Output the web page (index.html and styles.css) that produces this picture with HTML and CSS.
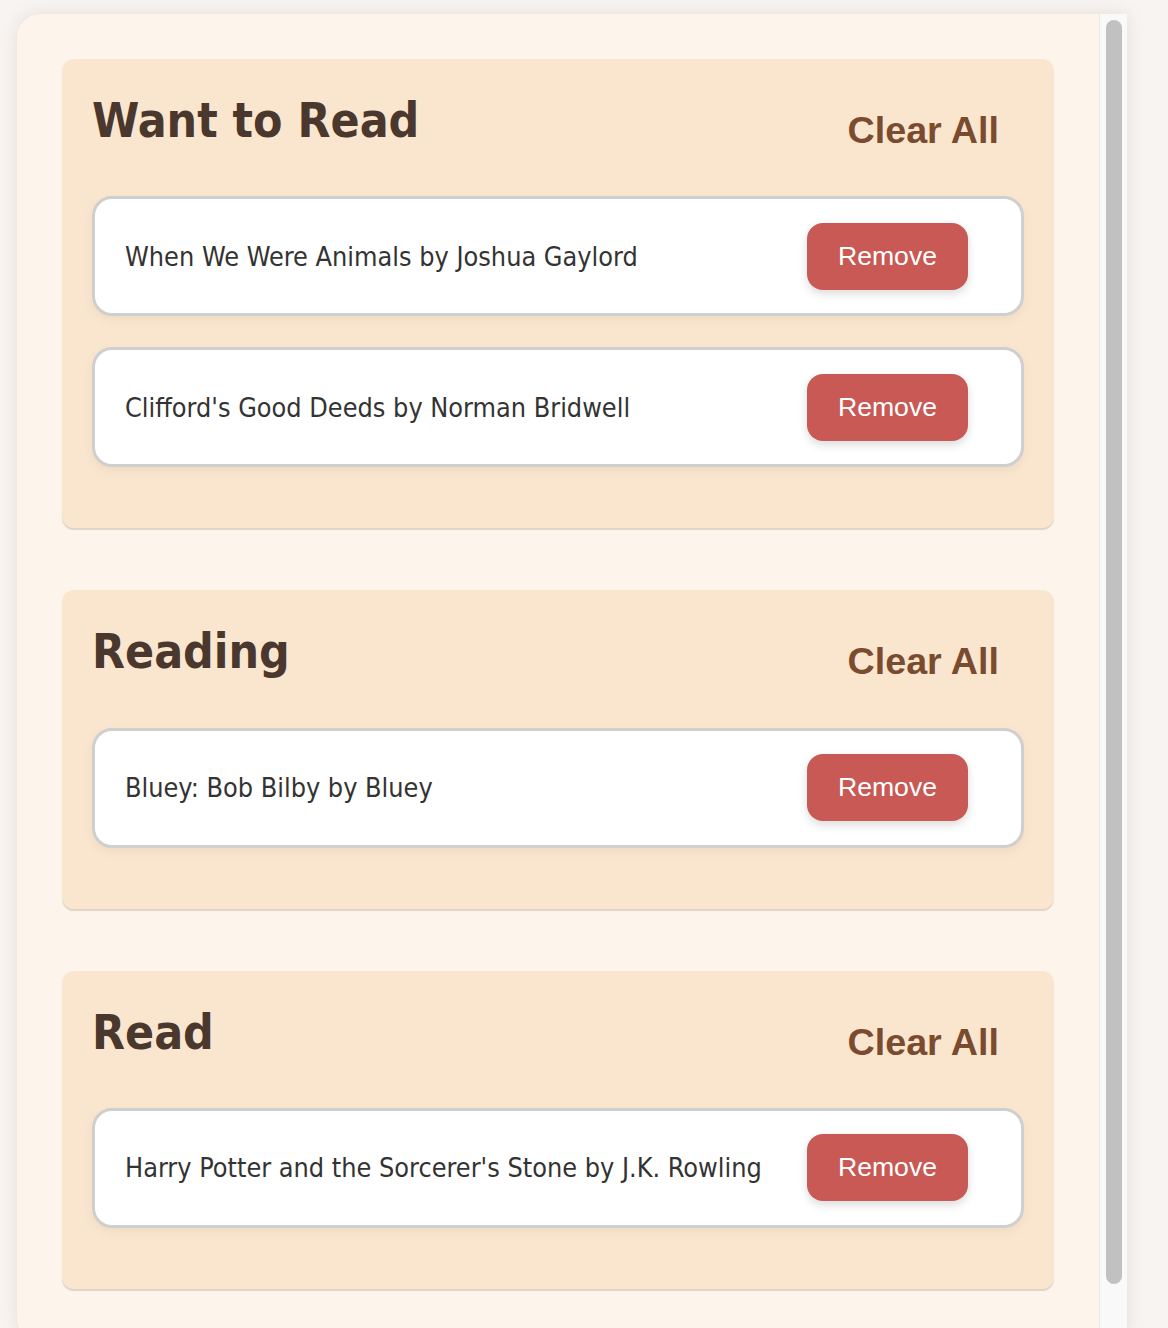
FILE: index.html
```html
<!DOCTYPE html>
<html lang="en">
<head>
<meta charset="utf-8">
<title>My Shelves</title>
<link rel="stylesheet" href="styles.css">
</head>
<body>
<div class="app">
  <main class="shelves">
    <section class="shelf">
      <div class="shelf-header">
        <h2 class="shelf-title">Want to Read</h2>
        <button class="clear-btn" type="button">Clear All</button>
      </div>
      <ul class="book-list">
        <li class="book-item">
          <span class="book-text">When We Were Animals by Joshua Gaylord</span>
          <button class="remove-btn" type="button">Remove</button>
        </li>
        <li class="book-item">
          <span class="book-text">Clifford's Good Deeds by Norman Bridwell</span>
          <button class="remove-btn" type="button">Remove</button>
        </li>
      </ul>
    </section>

    <section class="shelf">
      <div class="shelf-header">
        <h2 class="shelf-title">Reading</h2>
        <button class="clear-btn" type="button">Clear All</button>
      </div>
      <ul class="book-list">
        <li class="book-item">
          <span class="book-text">Bluey: Bob Bilby by Bluey</span>
          <button class="remove-btn" type="button">Remove</button>
        </li>
      </ul>
    </section>

    <section class="shelf">
      <div class="shelf-header">
        <h2 class="shelf-title">Read</h2>
        <button class="clear-btn" type="button">Clear All</button>
      </div>
      <ul class="book-list">
        <li class="book-item">
          <span class="book-text">Harry Potter and the Sorcerer's Stone by J.K. Rowling</span>
          <button class="remove-btn" type="button">Remove</button>
        </li>
      </ul>
    </section>
  </main>
  <div class="scrollbar" aria-hidden="true">
    <div class="scrollbar-thumb"></div>
  </div>
</div>
</body>
</html>
```

FILE: styles.css
```css
html, body {
  margin: 0;
  padding: 0;
  height: 100%;
  overflow: hidden;
}

body {
  background: #f8f4f1;
  font-family: "DejaVu Sans Condensed", "DejaVu Sans", sans-serif;
}

.app {
  box-sizing: border-box;
  width: 1110px;
  height: 1328px;
  margin: 14px 0 0 17px;
  display: flex;
  background: #fdf5ec;
  border-radius: 24px 0 0 24px;
  box-shadow: 0 0 18px rgba(60, 40, 20, 0.10);
  overflow: hidden;
}

.shelves {
  flex: 1;
  min-width: 0;
  padding: 45px;
  overflow: hidden;
}

.scrollbar {
  box-sizing: border-box;
  width: 28px;
  flex: none;
  background: #f9f9f9;
  border-left: 1px solid #e6e6e6;
  padding: 6px 5px 0 6px;
}

.scrollbar-thumb {
  height: 1264px;
  background: #c1c1c1;
  border-radius: 8px;
}

.shelf {
  background: #fae6cf;
  border-radius: 12px;
  padding: 30px;
  margin-bottom: 62px;
  box-shadow: 0 2px 1px rgba(120, 90, 60, 0.22);
}

.shelf-header {
  display: flex;
  justify-content: space-between;
  align-items: flex-start;
  margin-bottom: 24px;
}

.shelf-title {
  margin: 4px 0 0 0;
  font-size: 47.7px;
  line-height: 1.164;
  font-weight: bold;
  color: #4a372d;
}

.clear-btn {
  font-family: "Liberation Sans", Arial, sans-serif;
  font-size: 37.7px;
  font-weight: bold;
  color: #7b4b2f;
  background: transparent;
  border: none;
  padding: 20px 25px;
  line-height: 1.149;
  cursor: pointer;
}

.book-list {
  list-style: none;
  margin: 0;
  padding: 0;
}

.book-item {
  box-sizing: border-box;
  height: 120px;
  display: flex;
  align-items: center;
  justify-content: space-between;
  background: #ffffff;
  border: 3px solid #cfcfcf;
  border-radius: 20px;
  padding: 0 53px 0 30px;
  margin-bottom: 31px;
  box-shadow: 0 4px 10px rgba(120, 90, 60, 0.08);
}

.book-text {
  font-size: 26.8px;
  color: #333333;
}

.remove-btn {
  font-family: "Liberation Sans", Arial, sans-serif;
  font-size: 26.6px;
  line-height: 31px;
  color: #ffffff;
  background: #c85955;
  border: none;
  border-radius: 16px;
  padding: 18px 31px;
  box-shadow: 0 4px 10px rgba(0, 0, 0, 0.14);
  cursor: pointer;
}
```
